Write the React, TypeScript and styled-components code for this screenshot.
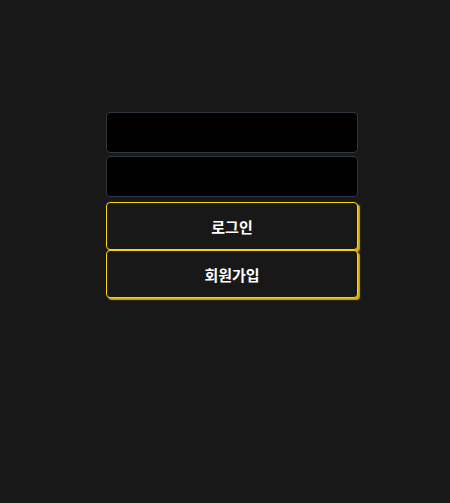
import React from "react";
import styled, { createGlobalStyle } from "styled-components";

const Global = createGlobalStyle`
  html, body {
    margin: 0;
    padding: 0;
    background: #181818;
    font-family: "Noto Sans CJK KR", "Noto Sans", sans-serif;
  }
`;

const Page = styled.div`
  min-height: 503px;
  display: flex;
  justify-content: center;
  padding: 112px 0 0 14px;
  box-sizing: border-box;
`;

const Form = styled.form`
  width: 252px;
  display: flex;
  flex-direction: column;
`;

const Input = styled.input`
  box-sizing: border-box;
  height: 41px;
  margin-bottom: 3px;
  background: #000;
  border: 1px solid #2e3841;
  border-radius: 4px;
  color: #fff;
  padding: 0 12px;
  outline: none;
  &:last-of-type {
    margin-bottom: 5px;
  }
`;

const Button = styled.button`
  box-sizing: border-box;
  height: 48px;
  background: #181818;
  border: 1px solid #ffd600;
  border-radius: 4px;
  color: #fff;
  font-family: "Noto Sans CJK KR", "Noto Sans", sans-serif;
  font-size: 15px;
  font-weight: 700;
  box-shadow: 2px 2px 1px #d4b000;
  cursor: pointer;
`;

export default function App() {
  return (
    <>
      <Global />
      <Page>
        <Form onSubmit={(e) => e.preventDefault()}>
          <Input type="text" />
          <Input type="password" />
          <Button type="submit">로그인</Button>
          <Button type="button">회원가입</Button>
        </Form>
      </Page>
    </>
  );
}
